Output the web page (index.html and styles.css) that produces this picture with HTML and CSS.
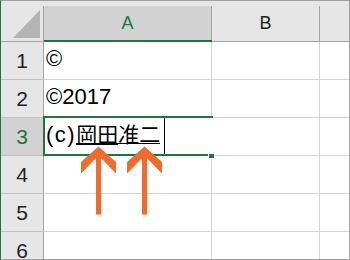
FILE: index.html
```html
<!DOCTYPE html>
<html lang="ja">
<head>
<meta charset="UTF-8">
<meta name="viewport" content="width=device-width, initial-scale=1.0">
<title>Sheet</title>
<link rel="stylesheet" href="styles.css">
</head>
<body>
	<div class="sheet">
		<div class="grid">
			<div class="corner"><div class="hd"><svg class="tri" width="42" height="35"><polygon points="39,4 39,32 12,32" /></svg></div></div>
			<div class="colhead active"><div class="hd">A</div></div>
			<div class="colhead"><div class="hd">B</div></div>
			<div class="colhead last"><div class="hd"></div></div>

			<div class="rowhead">1</div>
			<div class="cell">©</div>
			<div class="cell"></div>
			<div class="cell last"></div>

			<div class="rowhead">2</div>
			<div class="cell">©2017</div>
			<div class="cell"></div>
			<div class="cell last"></div>

			<div class="rowhead active">3</div>
			<div class="cell editing">
				<div class="editbox"><span class="lat">(c)</span><span class="ime thick">岡田</span><span class="ime thin">准二</span></div>
			</div>
			<div class="cell"></div>
			<div class="cell last"></div>

			<div class="rowhead">4</div>
			<div class="cell"></div>
			<div class="cell"></div>
			<div class="cell last"></div>

			<div class="rowhead">5</div>
			<div class="cell"></div>
			<div class="cell"></div>
			<div class="cell last"></div>

			<div class="rowhead end">6</div>
			<div class="cell end"></div>
			<div class="cell end"></div>
			<div class="cell last end"></div>
		</div>

		<!-- selection frame of A3 -->
		<div class="sel"></div>

		<!-- annotation arrows -->
		<svg class="arrows" width="350" height="260" viewBox="0 0 350 260">
			<polygon points="98.5,146.5 116,162 116,173.5 101,158 101,214.5 96,214.5 96,158 81,173.5 81,162" />
			<polygon points="144.5,146.5 162,162 162,173.5 147,158 147,214.5 142,214.5 142,158 127,173.5 127,162" />
		</svg>
	</div>
</body>
</html>
```

FILE: styles.css
```css
html, body {
	margin: 0;
	background: #fff;
}

body {
	font-family: "Liberation Sans", "Noto Sans CJK JP", sans-serif;
}

.sheet {
	position: relative;
	width: 350px;
	height: 260px;
	box-sizing: border-box;
	border: 1px solid #a0a0a0;
	border-left-color: #217346;
	overflow: hidden;
}

.grid {
	display: grid;
	grid-template-columns: 43px 168px 108px 29px;
	grid-template-rows: 41px repeat(5, 38px) 27px;
}

.grid > div {
	box-sizing: border-box;
	min-width: 0;
	overflow: hidden;
}

/* header row */
.corner, .colhead {
	background: #e6e6e6;
	padding-top: 5px;
	border-bottom: 1px solid #a5a5a5;
}

.hd {
	height: 100%;
	box-sizing: border-box;
	border-right: 1px solid #a5a5a5;
	display: flex;
	align-items: center;
	justify-content: center;
	font-size: 18px;
	color: #222;
}

.tri polygon {
	fill: #b4b4b4;
}

.colhead.active {
	border-bottom: 2px solid #217346;
}

.colhead.active .hd {
	background: #d2d2d2;
	color: #217346;
}

.colhead.last .hd {
	border-right: none;
}

/* row numbers */
.rowhead {
	background: #e6e6e6;
	border-right: 1px solid #a5a5a5;
	border-bottom: 1px solid #bfbfbf;
	text-align: center;
	font-size: 21px;
	line-height: 37px;
	color: #222;
}

.rowhead.active {
	background: #d2d2d2;
	color: #217346;
}

/* cells */
.cell {
	background: #fff;
	border-right: 1px solid #d4d4d4;
	border-bottom: 1px solid #d4d4d4;
	padding-left: 2px;
	font-size: 22px;
	line-height: 34px;
	color: #000;
	white-space: nowrap;
}

.grid > .last {
	border-right: none;
}

.grid > .end {
	border-bottom: none;
}

.cell.editing {
	border-right-color: #fff;
	padding-left: 0;
}

.editbox {
	width: 121px;
	height: 100%;
	box-sizing: border-box;
	border-right: 1px solid #000;
	padding-left: 2px;
}

.lat {
	letter-spacing: 1.5px;
}

.ime {
	display: inline-block;
	font-family: "Noto Sans CJK JP", sans-serif;
	font-size: 21px;
	line-height: 20px;
}

.ime.thick {
	border-bottom: 2px solid #000;
}

.ime.thin {
	border-bottom: 1px solid #000;
}

/* active cell frame */
.sel {
	position: absolute;
	left: 42px;
	top: 115px;
	width: 170px;
	height: 40px;
	box-sizing: border-box;
	border-top: 2px solid #217346;
	border-left: 2px solid #217346;
}

.sel::before {
	content: "";
	position: absolute;
	left: -2px;
	bottom: 0;
	width: 165px;
	height: 2px;
	background: #217346;
}

.sel::after {
	content: "";
	position: absolute;
	left: 164px;
	top: 36px;
	width: 5px;
	height: 4px;
	background: #217346;
	box-shadow: 0 0 0 1px #fff;
}

.arrows {
	position: absolute;
	left: -1px;
	top: -1px;
}

.arrows polygon {
	fill: #f26b2b;
}
```
